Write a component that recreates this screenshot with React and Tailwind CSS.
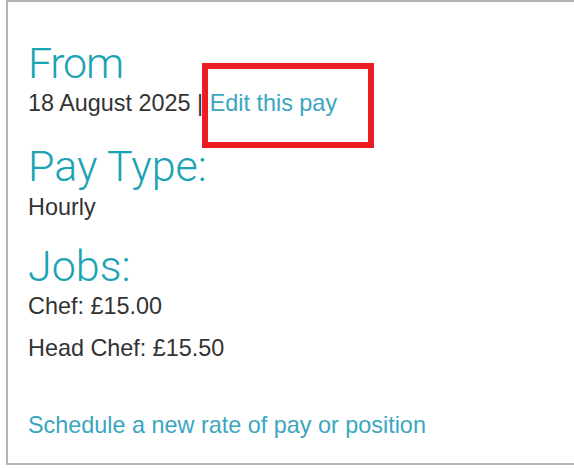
export default function App() {
  const body = "font-['Liberation_Sans',Arial,sans-serif] text-[23.4px] leading-[23px] text-[#333333]";
  const head = "font-['Roboto','Helvetica_Neue',sans-serif] font-light text-[43px] leading-[42px] text-[#1aa3b3]";
  return (
    <div className="relative w-[574px] h-[469px] overflow-hidden bg-white">
      <div className="ml-[6px] w-[620px] h-[465px] border-2 border-[#b5b5b5] pl-5 pt-[40px]">
        <h1 className={head + " tracking-[-1.3px]"}>From</h1>
        <p className={body + " mt-[8px]"}>
          18 August 2025 | <a className="text-[#3aa6bf]">Edit this pay</a>
        </p>
        <h2 className={head + " mt-[30px]"}>Pay Type:</h2>
        <p className={body + " mt-[9px]"}>Hourly</p>
        <h2 className={head + " mt-[26px]"}>Jobs:</h2>
        <p className={body + " mt-[8px]"}>Chef: £15.00</p>
        <p className={body + " mt-[19px]"}>Head Chef: £15.50</p>
        <p className={body + " mt-[54px]"}>
          <a className="text-[#3aa6bf]">Schedule a new rate of pay or position</a>
        </p>
      </div>
      <div className="absolute left-[202px] top-[63px] w-[172px] h-[85px] border-[6px] border-[#ed1c24]" />
    </div>
  );
}
